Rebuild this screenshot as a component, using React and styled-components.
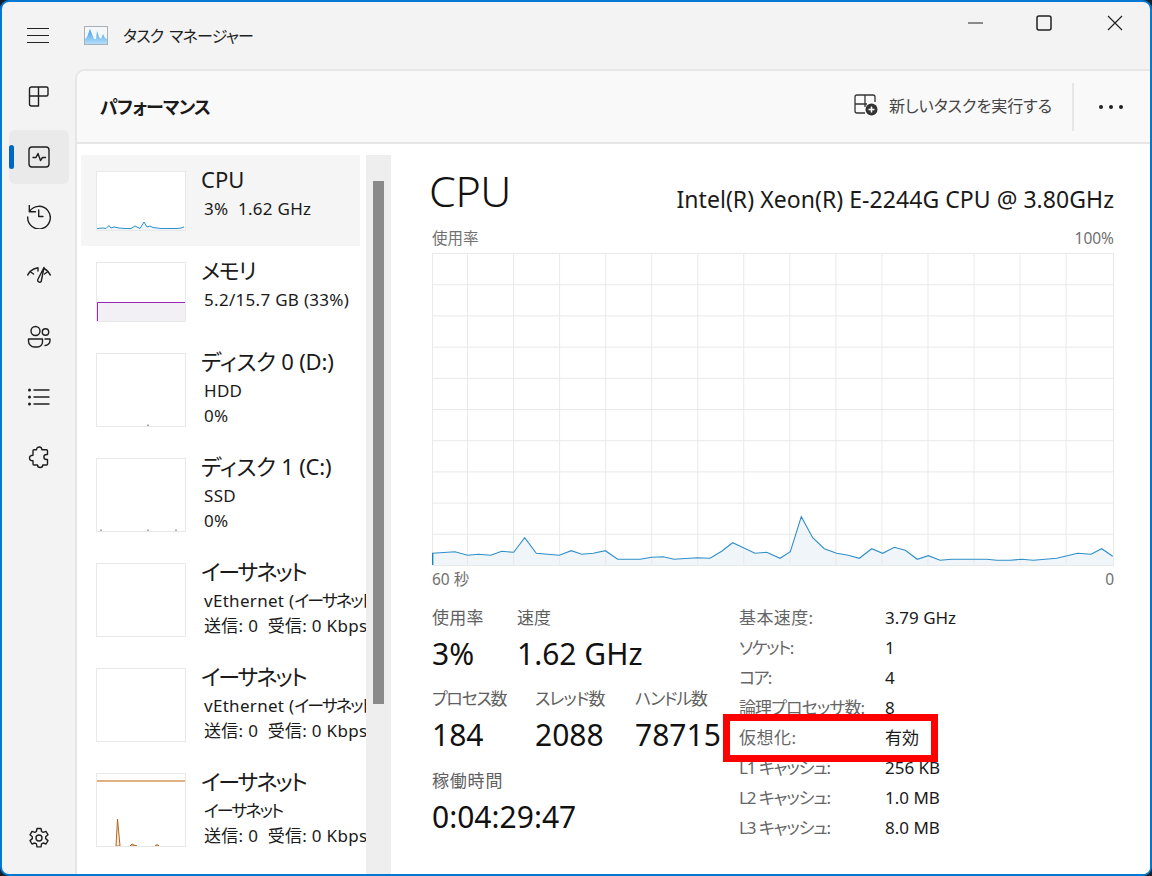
import React from "react";
import styled, { createGlobalStyle } from "styled-components";

const Global = createGlobalStyle`
  html, body { margin: 0; padding: 0; background: #14202c; }
  body { font-family: "Noto Sans", "Noto Sans CJK JP", sans-serif; color: #1a1a1a; font-feature-settings: "palt"; }
  * { box-sizing: border-box; }
`;

const Win = styled.div`
  position: relative; width: 1152px; height: 876px; border: 2px solid #0078d4; border-radius: 9px;
  background: #f3f3f3; display: flex; flex-direction: column; overflow: hidden;
`;
const TitleBar = styled.header`
  height: 67px; flex: none; display: flex; align-items: flex-start; padding-top: 13px;
`;
const IconSlot = styled.div`
  width: ${p => p.$w || 24}px; height: ${p => p.$h || 24}px; flex: none; display: flex; align-items: center; justify-content: center;
  margin-left: ${p => p.$ml || 0}px; color: #1f1f1f;
  svg { display: block; }
`;
const AppTitle = styled.span`
  font-size: 16px; line-height: 40px; margin-left: 15px; color: #1f1f1f; letter-spacing: -0.8px; word-spacing: 3px;
  font-family: "Noto Sans CJK JP", sans-serif;
`;
const WinControls = styled.div`
  margin-left: auto; display: flex;
`;
const CtrlBtn = styled.button`
  width: ${p => p.$w || 71}px; height: 16px; padding: 0; border: 0; background: none; display: flex; align-items: center; justify-content: center; color: #1a1a1a;
`;
const Body = styled.div`
  flex: 1; display: flex; min-height: 0;
`;
const Sidebar = styled.nav`
  width: 73px; flex: none; display: flex; flex-direction: column; gap: 6px; padding: 1px 6px 9px 7px;
`;
const NavItem = styled.div`
  position: relative; height: 54px; flex: none; border-radius: 6px; display: flex; align-items: center; justify-content: center;
  background: ${p => p.$active ? "#eaeaea" : "transparent"};
  margin-top: ${p => p.$bottom ? "auto" : "0"}; color: #1f1f1f;
`;
const NavMark = styled.span`
  position: absolute; left: 0; top: 15px; width: 5px; height: 24px; border-radius: 3px; background: #0067c0;
`;
const Main = styled.main`
  flex: 1; min-width: 0; display: flex; flex-direction: column; background: #fff;
  border-left: 2px solid #e6e6e6; border-top: 2px solid #e6e6e6; border-top-left-radius: 10px; overflow: hidden;
`;
const Head = styled.div`
  height: 73px; flex: none; background: #f9f9f9; border-bottom: 2px solid #e6e6e6; display: flex; align-items: center; padding-left: 23px; padding-right: 27px;
`;
const PageTitle = styled.h1`
  margin: 0 0 2px; font-size: 18px; line-height: 28px; font-weight: 600; letter-spacing: -0.8px; font-family: "Noto Sans CJK JP", sans-serif; color: #1a1a1a;
`;
const RunBtn = styled.div`
  margin-left: auto; display: flex; align-items: center; gap: 11px; font-size: 16px; color: #444; padding-bottom: 3px;
  font-family: "Noto Sans CJK JP", sans-serif;
`;
const Divider = styled.span`
  width: 2px; height: 48px; background: #e6e6e6; margin-left: 20px; margin-right: 25px; flex: none;
`;
const Content = styled.div`
  flex: 1; min-height: 0; display: flex;
`;
const ListCol = styled.div`
  width: 289px; flex: none; overflow: hidden; padding: 11px 0 0 4px;
`;
const Item = styled.div`
  display: flex; width: 279px; height: ${p => p.$short ? 91 : 105}px; padding: 16px 0 0 15px; gap: 15px;
  background: ${p => p.$active ? "#f5f5f5" : "transparent"};
`;
const Thumb = styled.div`
  width: 90px; height: ${p => p.$short ? 60 : 74}px; flex: none; background: #fff; border: 1px solid #e8e8e8;
  svg { display: block; width: 100%; height: 100%; }
`;
const ItemText = styled.div`
  margin-top: -8px; white-space: nowrap;
`;
const ItemName = styled.div`
  font-size: 22px; line-height: 33px; color: #1a1a1a; letter-spacing: ${p => p.$ls || 0}px;
`;
const ItemSub = styled.div`
  font-size: 17px; line-height: 25px; padding-left: 3px; color: #1a1a1a; white-space: pre; letter-spacing: 0.3px;
`;
const Kana = styled.span`
  letter-spacing: -2px;
`;
const Track = styled.div`
  width: 25px; flex: none; background: #eeeeee; margin-top: 11px; padding: 26px 7px 0;
`;
const Thumbbar = styled.div`
  height: 523px; background: #8a8a8a;
`;
const Detail = styled.section`
  flex: 1; min-width: 0; padding: 0 36px 0 41px; position: relative;
`;
const DetailHead = styled.div`
  display: flex; justify-content: space-between; align-items: flex-end; height: 77px;
`;
const CpuTitle = styled.div`
  font-size: 43px; line-height: 60px; font-weight: 300; margin-left: -3px; letter-spacing: -0.4px; color: #111;
`;
const CpuModel = styled.div`
  font-size: 23px; line-height: 30px; margin-bottom: 7px; letter-spacing: 0.05px; color: #1a1a1a;
`;
const AxisRow = styled.div`
  display: flex; justify-content: space-between; font-size: 15.5px; line-height: 20px; color: #707070;
  margin-top: ${p => p.$mt || 0}px;
`;
const Graph = styled.div`
  height: 313px; margin-top: 5px; svg { display: block; width: 100%; height: 100%; }
`;
const Stats = styled.div`
  display: flex; margin-top: 18px;
`;
const StatLeft = styled.div`
  width: 307px; flex: none;
`;
const StatRow = styled.div`
  display: flex; margin-bottom: ${p => p.$mb || 13}px;
`;
const Stat = styled.div`
  width: ${p => p.$w}px; flex: none;
`;
const StatLabel = styled.div`
  font-size: 17px; line-height: 22px; color: #5f5f5f; white-space: nowrap; letter-spacing: ${p => p.$ls || 0}px;
`;
const StatValue = styled.div`
  font-size: 30px; line-height: 42px; margin-top: 4px; color: #111; white-space: nowrap;
`;
const InfoGrid = styled.div`
  display: grid; grid-template-columns: 146px auto; grid-auto-rows: 30px; align-items: center; margin-top: -4px;
`;
const InfoLabel = styled.div`
  font-size: 17px; color: #666; white-space: nowrap; line-height: 22px; letter-spacing: ${p => p.$ls}px;
`;
const InfoValue = styled.div`
  font-size: 17px; color: #1a1a1a; white-space: nowrap; line-height: 22px;
`;
const Highlight = styled.div`
  position: absolute; left: 332px; top: 570px; width: 215px; height: 48px; border: 7px solid #ff0000; pointer-events: none;
`;

const S = { fill: "none", stroke: "currentColor", strokeWidth: 1.4, strokeLinecap: "round", strokeLinejoin: "round" };

const Hamburger = () => (
  <svg width="22" height="17" viewBox="0 0 22 17"><path d="M0 1.500h22M0 8.500h22M0 15.500h22" stroke="#222" strokeWidth="1.200" /></svg>
);
const AppIcon = () => (
  <svg width="24" height="19" viewBox="0 0 24 19">
    <defs>
      <linearGradient id="appg" x1="0" y1="0" x2="0" y2="1"><stop offset="0" stopColor="#3d9fe8" /><stop offset="1" stopColor="#b4defa" /></linearGradient>
    </defs>
    <rect x=".5" y=".5" width="23" height="18" fill="#f4f6f8" stroke="#a8b0b8" />
    <path d="M1 17V13L3 11L6 3L8 8L10 13L12 13L13 5L15 11L17 13L19 8L21 12L23 13V18H1Z" fill="url(#appg)" />
  </svg>
);
const Ico = ({ children }) => <svg width="24" height="24" viewBox="0 0 24 24" {...S}>{children}</svg>;
const IProcess = () => <Ico><path transform="translate(0 -1)" d="M11.500 3H4.500a2 2 0 0 0-2 2v15a2 2 0 0 0 2 2h7V3M11.500 3h8a1.500 1.500 0 0 1 1.500 1.500v6a1.500 1.500 0 0 1-1.500 1.500H2.500" /></Ico>;
const IPerf = () => <Ico><rect x="2" y="2" width="20" height="20" rx="3" /><path d="M6 12.500h3l2-4 2.500 7 2-3h3" /></Ico>;
const IHistory = () => <Ico><g transform="translate(0 -1)"><path d="M2.300 1v6.800h6.200M2.300 7.800A11.300 11.300 0 1 1 .7 13" /><path d="M11.700 6v6.500H16" /></g></Ico>;
const IStartup = () => <Ico><g transform="translate(0 -1)"><path d="M.7 11L3 7.500 6.500 10M23.300 11L21 7.500 17.500 10M3 7.500Q6.500 4.500 11 3.800V7M21 7.500Q19 5.500 17 4.500" /><path d="M17 3.500L10.800 15.500a2 2 0 0 0 3.400 2z" /></g></Ico>;
const IUsers = () => <Ico><circle cx="8.500" cy="6" r="4.500" /><circle cx="18.500" cy="7" r="3.200" /><path d="M1.500 14h14v3a5 5 0 0 1-5 5H7.500a6 6 0 0 1-6-6zM18 14h5v1.500a5 5 0 0 1-5 5" /></Ico>;
const IList = () => <Ico><path d="M7 5h15M7 12h15M7 19h15" /><circle cx="2.500" cy="5" r=".8" fill="currentColor" /><circle cx="2.500" cy="12" r=".8" fill="currentColor" /><circle cx="2.500" cy="19" r=".8" fill="currentColor" /></Ico>;
const IPuzzle = () => <Ico><path d="M9.500 4.800c0-1.800 1.200-2.800 2.700-2.800s2.700 1 2.700 2.800h4.600a1 1 0 0 1 1 1v3.700h-1c-1.500 0-2.600 1-2.600 2.500s1.100 2.500 2.600 2.500h1v4.500a1 1 0 0 1-1 1h-3.700c0 1.600-1.100 2.500-2.600 2.500s-2.700-.9-2.700-2.500H7a1 1 0 0 1-1-1v-3.200c-2 0-3.500-1.200-3.500-2.800s1.500-2.800 3.500-2.800V5.800a1 1 0 0 1 1-1z" /></Ico>;
const IGear = () => <Ico><circle cx="12" cy="12" r="3" /><path d="M10 2.500h4l.6 3 1.500.9 2.900-1 2 3.400-2.300 2 0 1.800 2.300 2-2 3.400-2.900-1-1.500.9-.6 3h-4l-.6-3-1.500-.9-2.900 1-2-3.400 2.300-2 0-1.800-2.300-2 2-3.400 2.900 1 1.500-.9z" /></Ico>;
const IRun = () => (
  <svg width="24" height="22" viewBox="0 0 24 22" fill="none">
    <path d="M1 3a2 2 0 0 1 2-2h16a2 2 0 0 1 2 2v5M1 3v14a2 2 0 0 0 2 2h8M1 10h12M11 1v9M11 10v3" stroke="#333" strokeWidth="1.300" />
    <circle cx="17.500" cy="15.500" r="6" fill="#333" />
    <path d="M14.500 15.500h6M17.500 12.500v6" stroke="#fff" strokeWidth="1.500" />
  </svg>
);

const cpuLine = "432,553.3 455,551.7 467.7,555.3 478.3,554.3 490.7,555.3 501.7,551.3 513.7,552.3 524.7,537.7 536.3,553.3 559.3,555.3 571.3,550.7 581.7,554.3 593.3,553.3 605.3,550.7 617.7,559.3 640,559.3 651.7,557.3 663.3,556.7 674,559.3 697.3,557.7 710,558.3 721.7,551.3 732.7,542.7 755,553.3 766.7,552.3 780,558.3 790.3,551.7 801.3,516.7 812.7,537.7 824.3,548.7 836.7,553.3 848.3,555.3 859.3,558.3 871.7,548.7 882.7,553.3 894.3,547.3 905.3,550.3 917.3,559.3 928.3,555.7 940,560.3 951.7,559.3 986.7,559.3 996.7,560.3 1010,560.3 1021.7,559.3 1033.3,560.3 1056.7,558.3 1077.7,553.3 1091,554.3 1101.7,548.7 1112.7,556.3"
  .split(" ").map(p => p.split(",").map(Number)).map(([x, y]) => [x - 432, y - 253]);

const BigGraph = () => {
  const W = 682, H = 312;
  const hs = Array.from({ length: 11 }, (_, i) => i * 31.2);
  const vs = Array.from({ length: 14 }, (_, i) => 35.5 + i * 46.05);
  const line = cpuLine.map(p => p.join(",")).join(" ");
  return (
    <svg viewBox={`0 0 ${W} ${H + 1}`} preserveAspectRatio="none">
      <path d={`M0 ${H} L${line} L${W - 1} ${H} Z`} fill="#f0f5fa" />
      {hs.map(y => <line key={y} x1="0" x2={W} y1={y + .5} y2={y + .5} stroke="#e9e9e9" />)}
      {vs.map(x => <line key={x} y1="0" y2={H} x1={x} x2={x} stroke="#e9e9e9" />)}
      <path d={`M.5 0V${H}M${W - .5} 0V${H}`} stroke="#e9e9e9" />
      <polyline points={line} fill="none" stroke="#2f8fc8" strokeWidth="1.100" />
      <path d={`M.7 ${cpuLine[0][1]}V${H}`} stroke="#117dbb" strokeWidth="1.300" />
    </svg>
  );
};
const CpuSpark = () => (
  <svg viewBox="0 0 88 58">
    <path d="M0 56.500L6 56 9 56.500 12 53.500 14 56 17 55 22 56 28 56.500 34 56.500 38 54 41 55.500 43 56.500 47 50 50 55 53 54 56 55.500 60 56 64 56.500 70 56.500 74 56.500 80 56.500 84 56 87 55V58H0Z" fill="#f0f5fa" />
    <polyline points="0,56.500 6,56 9,56.500 12,53.500 14,56 17,55 22,56 28,56.500 34,56.500 38,54 41,55.500 43,56.500 47,50 50,55 53,54 56,55.500 60,56 64,56.500 70,56.500 74,56.500 80,56.500 84,56 87,55" fill="none" stroke="#2f8fc8" strokeWidth="1" />
  </svg>
);
const MemSpark = () => (
  <svg viewBox="0 0 88 58">
    <rect x="0" y="39" width="88" height="19" fill="#f2f0f4" />
    <path d="M.5 58V39.500H88" fill="none" stroke="#9528b4" strokeWidth="1" />
  </svg>
);
const Dots = ({ xs, color }) => (
  <svg viewBox="0 0 88 72">
    {xs.map(x => <rect key={x} x={x} y="70.500" width="2" height="1.500" fill={color} />)}
  </svg>
);
const EthSpark = () => (
  <svg viewBox="0 0 88 72">
    <path d="M0 7H88" stroke="#d8975a" strokeWidth="1.300" />
    <path d="M19 72L20.500 45 23 72ZM33 72L35 70 38 71.500 40 72ZM58 72L60 70.500 62 72Z" fill="#f6ece2" stroke="#b0651f" strokeWidth="1" />
  </svg>
);

const veth = <>vEthernet (<Kana>イーサネット</Kana></>;
const items = [
  { name: "CPU", sub: ["3%  1.62 GHz"], short: true, active: true, g: <CpuSpark /> },
  { name: "メモリ", ls: -1.3, sub: ["5.2/15.7 GB (33%)"], short: true, g: <MemSpark /> },
  { name: "ディスク 0 (D:)", ls: -0.2, sub: ["HDD", "0%"], g: <Dots xs={[50]} color="#9aa" /> },
  { name: "ディスク 1 (C:)", ls: -0.2, sub: ["SSD", "0%"], g: <Dots xs={[3, 50, 78]} color="#9ab89a" /> },
  { name: "イーサネット", ls: -2, sub: [veth, "送信: 0  受信: 0 Kbps"] },
  { name: "イーサネット", ls: -2, sub: [veth, "送信: 0  受信: 0 Kbps"] },
  { name: "イーサネット", ls: -2, sub: [<Kana>イーサネット</Kana>, "送信: 0  受信: 0 Kbps"], g: <EthSpark /> },
];
const info = [
  ["基本速度:", "3.79 GHz", 0.4], ["ソケット:", "1", -1.4], ["コア:", "4", -1.6], ["論理プロセッサ数:", "8", -0.9],
  ["仮想化:", "有効", 0.5], ["L1 キャッシュ:", "256 KB", -1.1], ["L2 キャッシュ:", "1.0 MB", -1.1], ["L3 キャッシュ:", "8.0 MB", -1.1],
];
const navIcons = [IProcess, IPerf, IHistory, IStartup, IUsers, IList, IPuzzle];

export default function App() {
  return (
    <Win>
      <Global />
      <TitleBar>
        <IconSlot $w={22} $h={41} $ml={25}><Hamburger /></IconSlot>
        <IconSlot $w={24} $h={40} $ml={35}><AppIcon /></IconSlot>
        <AppTitle>タスク マネージャー</AppTitle>
        <WinControls>
          <CtrlBtn $w={65}><svg width="16" height="2" viewBox="0 0 16 2"><path d="M0 1h15" stroke="#222" strokeWidth="1" /></svg></CtrlBtn>
          <CtrlBtn><svg width="16" height="16" viewBox="0 0 16 16"><rect x="1" y="1" width="14" height="14" rx="2" fill="none" stroke="#222" strokeWidth="1.500" /></svg></CtrlBtn>
          <CtrlBtn><svg width="16" height="16" viewBox="0 0 16 16"><path d="M1 1l14 14M15 1L1 15" stroke="#222" strokeWidth="1.200" /></svg></CtrlBtn>
        </WinControls>
      </TitleBar>
      <Body>
        <Sidebar>
          {navIcons.map((I, i) => (
            <NavItem key={i} $active={i === 1}>{i === 1 && <NavMark />}<I /></NavItem>
          ))}
          <NavItem $bottom><IGear /></NavItem>
        </Sidebar>
        <Main>
          <Head>
            <PageTitle>パフォーマンス</PageTitle>
            <RunBtn><IRun />新しいタスクを実行する</RunBtn>
            <Divider />
            <svg width="24" height="4" viewBox="0 0 24 4"><circle cx="2" cy="2" r="2" fill="#222" /><circle cx="12" cy="2" r="2" fill="#222" /><circle cx="22" cy="2" r="2" fill="#222" /></svg>
          </Head>
          <Content>
            <ListCol>
              {items.map((it, i) => (
                <Item key={i} $short={it.short} $active={it.active}>
                  <Thumb $short={it.short}>{it.g}</Thumb>
                  <ItemText>
                    <ItemName $ls={it.ls}>{it.name}</ItemName>
                    {it.sub.map((s, j) => <ItemSub key={j}>{s}</ItemSub>)}
                  </ItemText>
                </Item>
              ))}
            </ListCol>
            <Track><Thumbbar /></Track>
            <Detail>
              <DetailHead>
                <CpuTitle>CPU</CpuTitle>
                <CpuModel>Intel(R) Xeon(R) E-2244G CPU @ 3.80GHz</CpuModel>
              </DetailHead>
              <AxisRow $mt={7}><span>使用率</span><span>100%</span></AxisRow>
              <Graph><BigGraph /></Graph>
              <AxisRow $mt={3}><span>60 秒</span><span>0</span></AxisRow>
              <Stats>
                <StatLeft>
                  <StatRow>
                    <Stat $w={85}><StatLabel $ls={0.3}>使用率</StatLabel><StatValue>3%</StatValue></Stat>
                    <Stat $w={200}><StatLabel>速度</StatLabel><StatValue>1.62 GHz</StatValue></Stat>
                  </StatRow>
                  <StatRow $mb={14}>
                    <Stat $w={103}><StatLabel $ls={-1.3}>プロセス数</StatLabel><StatValue>184</StatValue></Stat>
                    <Stat $w={100}><StatLabel $ls={-0.9}>スレッド数</StatLabel><StatValue>2088</StatValue></Stat>
                    <Stat $w={90}><StatLabel $ls={-1.2}>ハンドル数</StatLabel><StatValue>78715</StatValue></Stat>
                  </StatRow>
                  <StatRow>
                    <Stat $w={200}><StatLabel $ls={0.8}>稼働時間</StatLabel><StatValue>0:04:29:47</StatValue></Stat>
                  </StatRow>
                </StatLeft>
                <InfoGrid>
                  {info.map(([l, v, ls]) => (
                    <React.Fragment key={l}><InfoLabel $ls={ls}>{l}</InfoLabel><InfoValue>{v}</InfoValue></React.Fragment>
                  ))}
                </InfoGrid>
              </Stats>
              <Highlight />
            </Detail>
          </Content>
        </Main>
      </Body>
    </Win>
  );
}
